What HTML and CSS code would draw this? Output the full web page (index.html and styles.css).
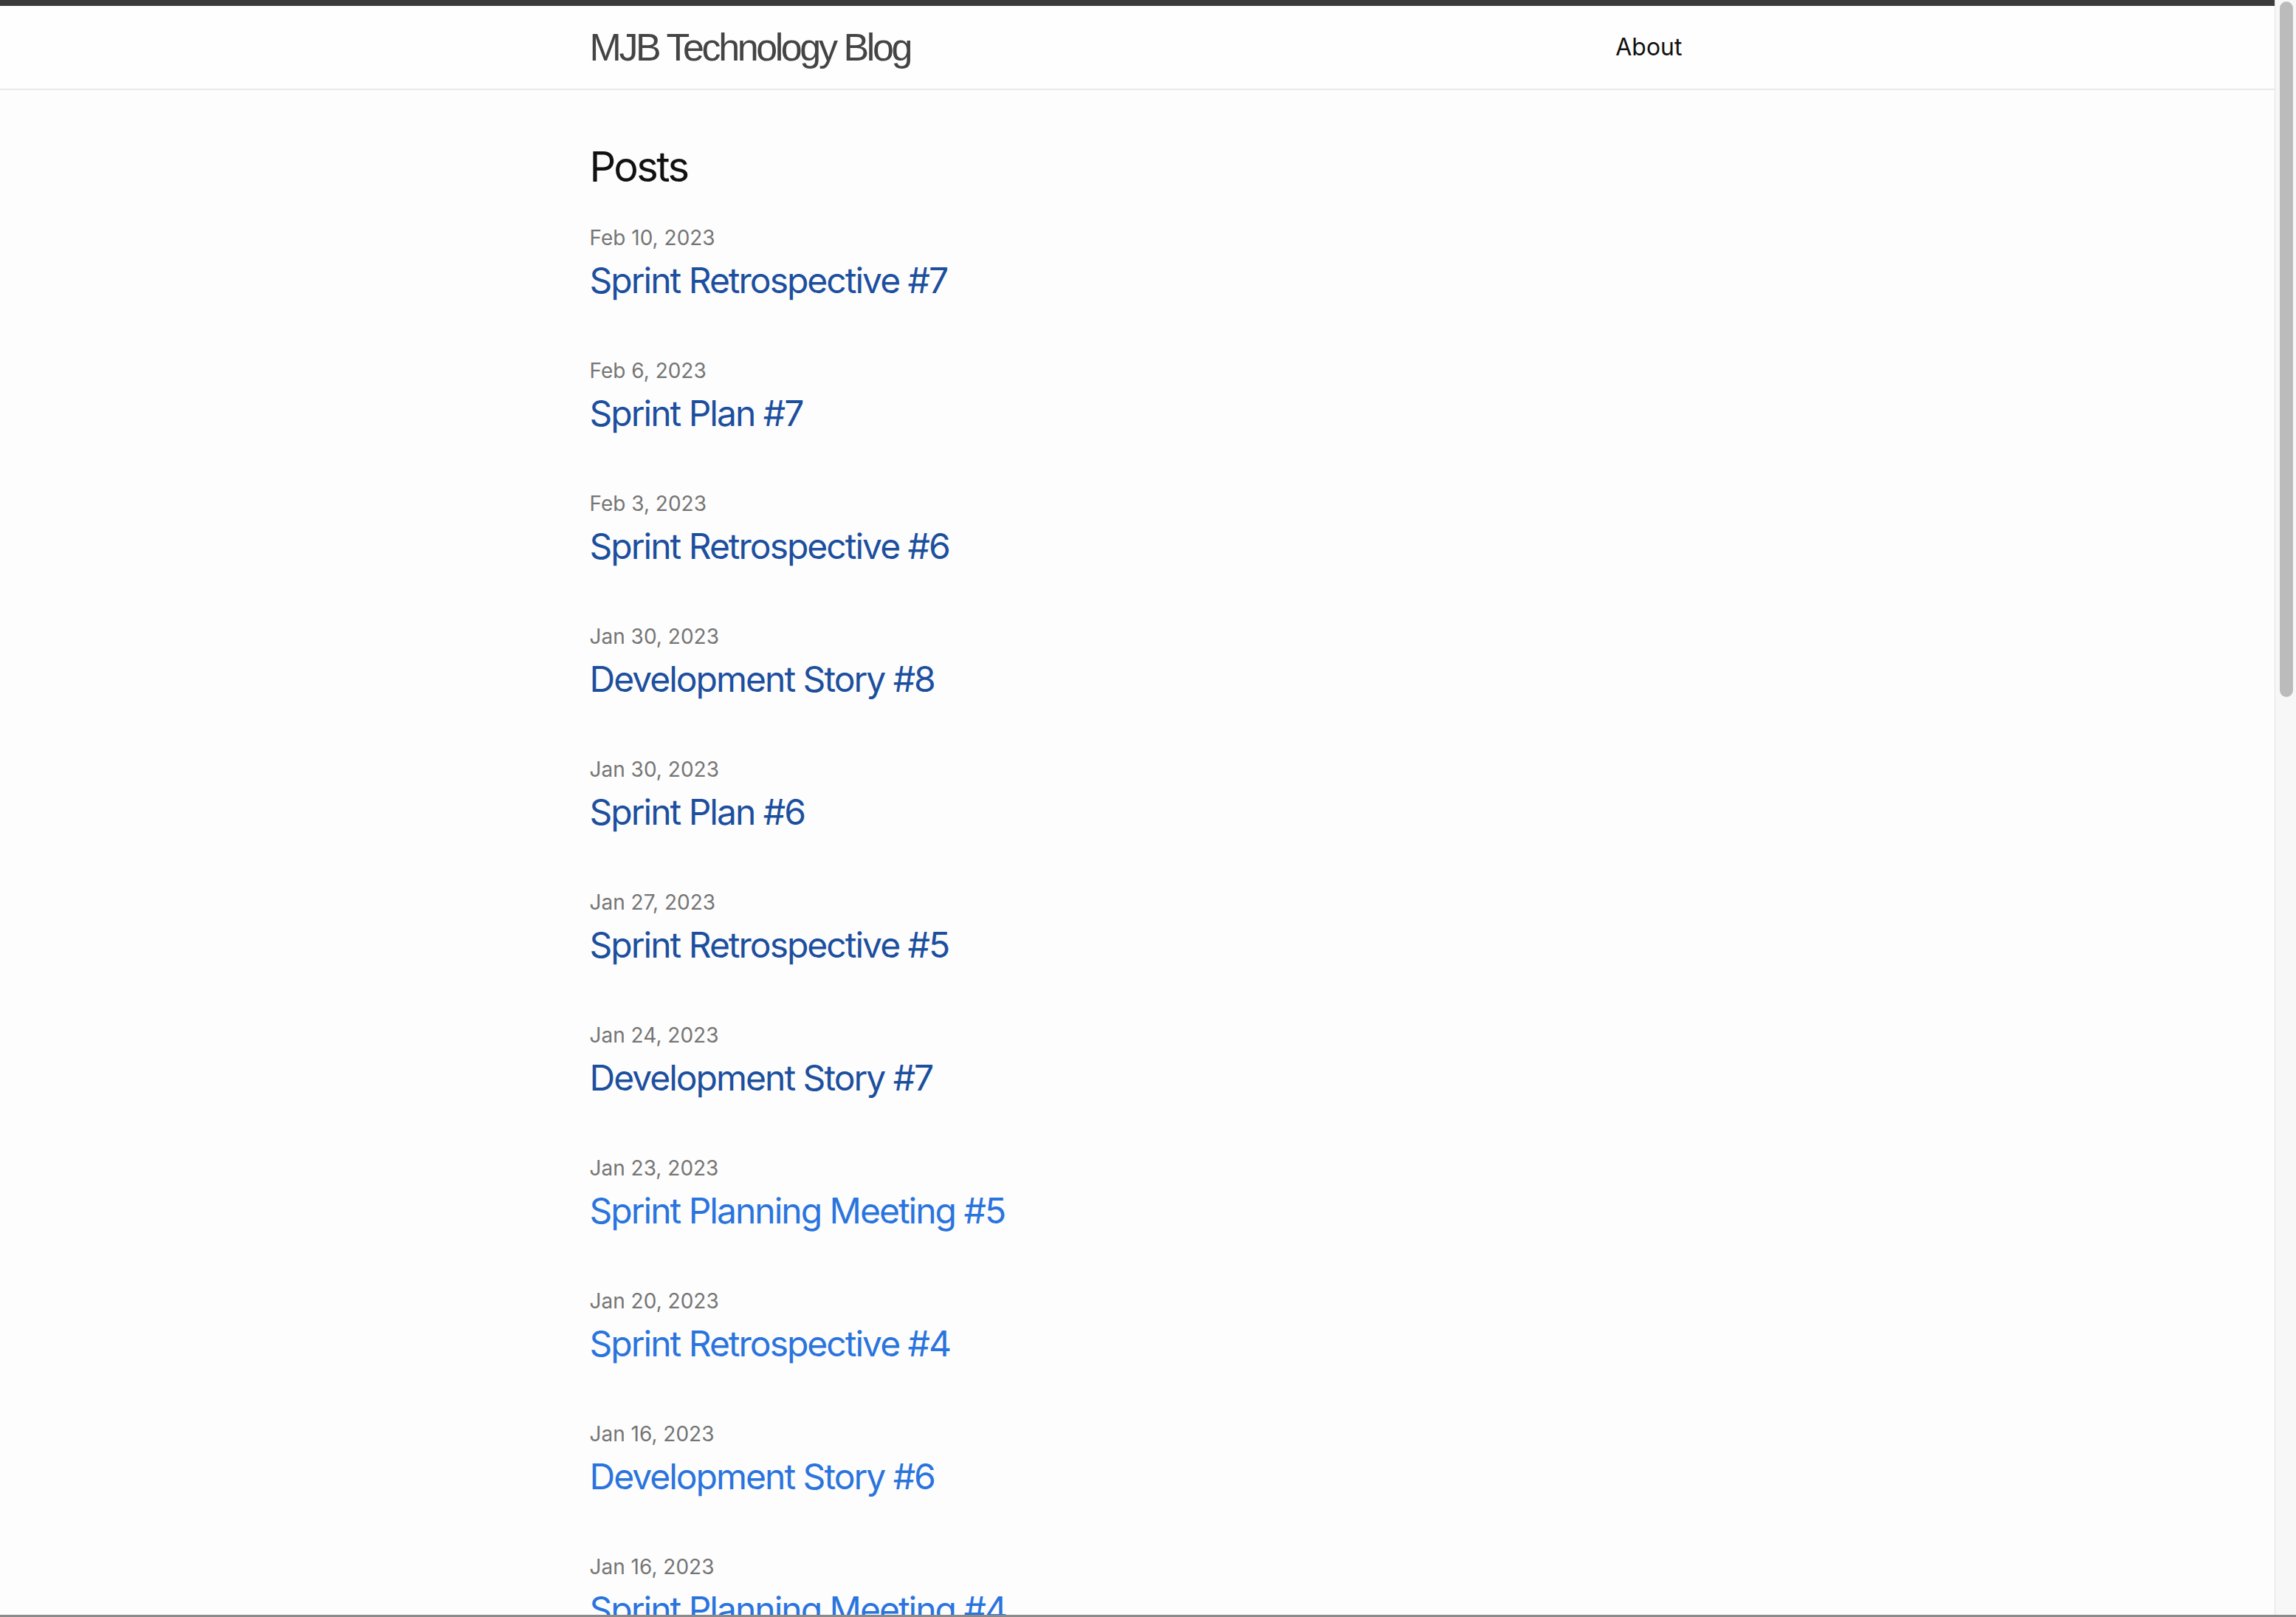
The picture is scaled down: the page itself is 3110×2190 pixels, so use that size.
FILE: index.html
```html
<!DOCTYPE html>
<html lang="en">
<head>
<meta charset="utf-8">
<title>MJB Technology Blog</title>
<link rel="stylesheet" href="styles.css">
</head>
<body>
<div class="window">
  <div class="page">
    <header class="site-header">
      <div class="wrapper header-inner">
        <a class="site-title" href="#">MJB Technology Blog</a>
        <nav class="site-nav"><a class="page-link" href="#">About</a></nav>
      </div>
    </header>
    <main class="page-content">
      <div class="wrapper">
        <h2 class="post-list-heading">Posts</h2>
        <ul class="post-list">
          <li><span class="post-meta">Feb 10, 2023</span><h3><a class="post-link visited" href="#">Sprint Retrospective #7</a></h3></li>
          <li><span class="post-meta">Feb 6, 2023</span><h3><a class="post-link visited" href="#">Sprint Plan #7</a></h3></li>
          <li><span class="post-meta">Feb 3, 2023</span><h3><a class="post-link visited" href="#">Sprint Retrospective #6</a></h3></li>
          <li><span class="post-meta">Jan 30, 2023</span><h3><a class="post-link visited" href="#">Development Story #8</a></h3></li>
          <li><span class="post-meta">Jan 30, 2023</span><h3><a class="post-link visited" href="#">Sprint Plan #6</a></h3></li>
          <li><span class="post-meta">Jan 27, 2023</span><h3><a class="post-link visited" href="#">Sprint Retrospective #5</a></h3></li>
          <li><span class="post-meta">Jan 24, 2023</span><h3><a class="post-link visited" href="#">Development Story #7</a></h3></li>
          <li><span class="post-meta">Jan 23, 2023</span><h3><a class="post-link" href="#">Sprint Planning Meeting #5</a></h3></li>
          <li><span class="post-meta">Jan 20, 2023</span><h3><a class="post-link" href="#">Sprint Retrospective #4</a></h3></li>
          <li><span class="post-meta">Jan 16, 2023</span><h3><a class="post-link" href="#">Development Story #6</a></h3></li>
          <li><span class="post-meta">Jan 16, 2023</span><h3><a class="post-link" href="#">Sprint Planning Meeting #4</a></h3></li>
        </ul>
      </div>
    </main>
  </div>
  <div class="scrollbar"><div class="thumb"></div></div>
</div>
<div class="window-edge"></div>
</body>
</html>
```
FILE: styles.css
```css
html, body {
  margin: 0;
  padding: 0;
  height: 2190px;
  overflow: hidden;
  background: #fdfdfd;
}
body {
  font-family: Inter, "Noto Sans", sans-serif;
  color: #111111;
}
.window {
  display: flex;
  height: 2190px;
}
.page {
  flex: 1;
  min-width: 0;
  background: #fdfdfd;
}
.wrapper {
  max-width: 1480px;
  margin: 0 auto;
  padding: 0 62px 0 58px;
}
.site-header {
  border-top: 8px solid #3b3b3b;
  border-bottom: 2px solid #e8e8e8;
  background: #fefefe;
}
.header-inner {
  display: flex;
  justify-content: space-between;
  align-items: center;
  height: 112px;
}
.site-title {
  font-family: "Liberation Sans", Arial, sans-serif;
  font-size: 52px;
  font-weight: 400;
  letter-spacing: -3.4px;
  color: #444444;
  text-decoration: none;
  line-height: 108px;
}
.page-link {
  font-size: 32px;
  color: #111111;
  text-decoration: none;
  line-height: 48px;
}
.page-content {
  padding-top: 62px;
}
.post-list-heading {
  font-size: 56px;
  font-weight: 400;
  letter-spacing: -2.6px;
  line-height: 84px;
  margin: 0 0 33px;
  color: #111111;
}
.post-list {
  list-style: none;
  margin: 0;
  padding: 0;
}
.post-list li {
  margin-bottom: 64px;
}
.post-meta {
  display: block;
  font-size: 28px;
  line-height: 42px;
  color: #757575;
}
.post-list h3 {
  margin: 0;
  font-size: 48px;
  font-weight: 400;
  letter-spacing: -2px;
  line-height: 74px;
}
.post-link {
  color: #2a74dd;
  text-decoration: none;
}
.post-link.visited {
  color: #1c4f9e;
}
.scrollbar {
  width: 29px;
  flex: none;
  background: #f7f7f7;
  border-left: 1px solid #e2e2e2;
  padding: 2px 4px 0 6px;
  box-sizing: border-box;
}
.thumb {
  height: 942px;
  background: #bbbbbb;
  border-radius: 9px;
}
.window-edge {
  position: fixed;
  left: 0;
  right: 0;
  bottom: 0;
  height: 3px;
  background: #8a8a8a;
}
```
